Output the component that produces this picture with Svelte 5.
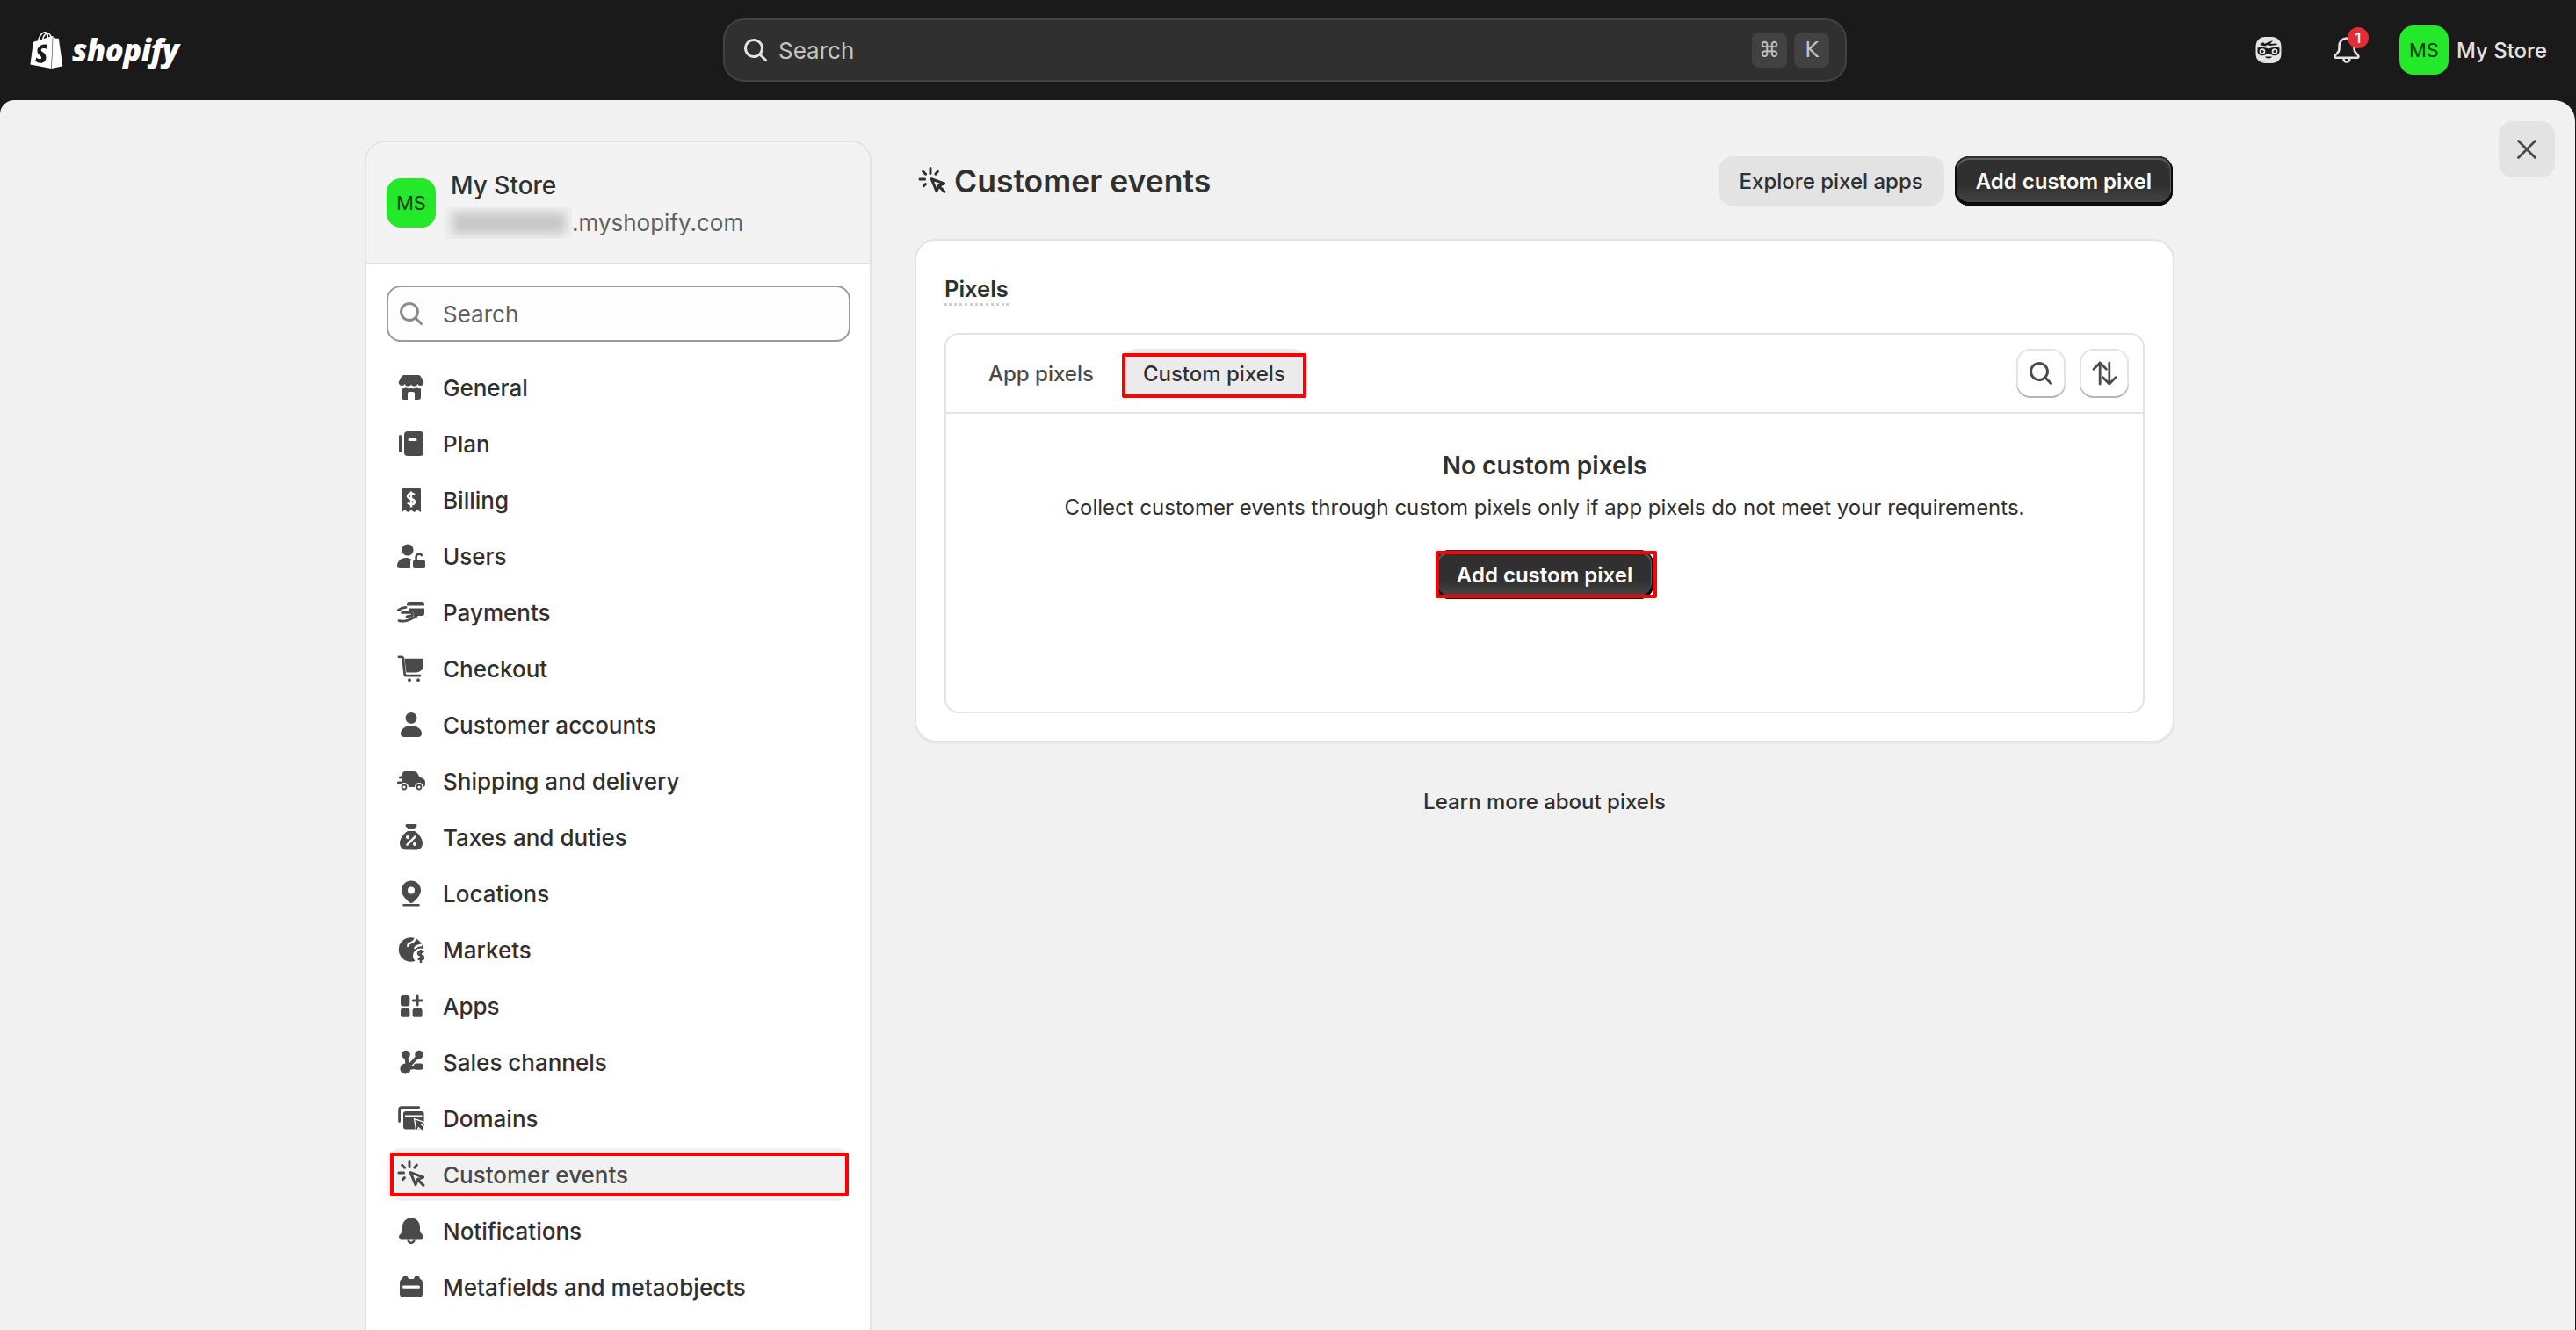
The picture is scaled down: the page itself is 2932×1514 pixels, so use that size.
<script>
  const cursor = '<g fill="none" stroke="currentColor" stroke-width="1.5" stroke-linecap="round" stroke-linejoin="round"><path d="M9 2.7v3M4.8 4.6l1.5 1.5M13.2 4.6l-1.3 1.5M3 9h2.8M5.2 12.8l1-1"/><path d="M9.6 8.8l7.2 2.7-3.1 1.2-1.2 3.2ZM13.8 12.8l3.2 3.4"/></g>';
  const nav = [
    { label: 'General', icon: '<path d="M6 3h8c.6 0 1.1.3 1.4.8L17 6.6c.3.6 0 1.9-1 2.3-1 .4-2-.1-2.3-.9-.4.9-1 1.3-1.9 1.3s-1.5-.4-1.8-1.1c-.3.7-.9 1.1-1.8 1.1s-1.5-.4-1.9-1.3c-.3.8-1.3 1.3-2.3.9-1-.4-1.3-1.7-1-2.3l1.6-2.8C4.9 3.3 5.4 3 6 3Z"/><path d="M4.5 10.6c1 .2 1.8 0 2.5-.5.8.6 2 .8 3 .3 1 .5 2.2.3 3-.3.7.5 1.5.7 2.5.5v4.9a1.5 1.5 0 0 1-1.5 1.5H12v-3.5a1 1 0 0 0-1-1H9a1 1 0 0 0-1 1V17H6a1.5 1.5 0 0 1-1.5-1.5Z"/>' },
    { label: 'Plan', icon: '<path d="M3 5.7a.75.75 0 0 1 1.5 0v8.6a.75.75 0 0 1-1.5 0Z"/><path fill-rule="evenodd" d="M8 3h7a2 2 0 0 1 2 2v10a2 2 0 0 1-2 2H8a2 2 0 0 1-2-2V5a2 2 0 0 1 2-2Zm1 4a.75.75 0 0 0 0 1.5h3.5a.75.75 0 0 0 0-1.5Z"/>' },
    { label: 'Billing', icon: '<path d="M6 3h8a1.5 1.5 0 0 1 1.5 1.5V17l-1.9-1.2-1.8 1.2-1.8-1.2-1.8 1.2-1.8-1.2L4.5 17V4.5A1.5 1.5 0 0 1 6 3Z"/><path fill="none" stroke="#fff" stroke-width="1.2" d="M12 7.3c-.4-.6-1.1-.9-2-.9-1.2 0-2 .6-2 1.5s.8 1.3 2 1.6 2 .7 2 1.6-.8 1.5-2 1.5c-.9 0-1.6-.3-2-.9M10 5.2v9"/>' },
    { label: 'Users', icon: '<circle cx="8" cy="6.5" r="3.3"/><path d="M2 15.5c0-2.5 2.2-4.5 5-4.5 1.2 0 2.2.3 3 .8-.3.4-.5 1-.5 1.6V17H3.5A1.5 1.5 0 0 1 2 15.5Z"/><rect x="11" y="12.3" width="7" height="4.7" rx="1"/><path fill="none" stroke="currentColor" stroke-width="1.3" d="M12.800 12.500v-2a1.800 1.800 0 0 1 3.500-.4"/>' },
    { label: 'Payments', icon: '<path d="M9 4h7a1.5 1.5 0 0 1 1.5 1.5V6.300H7.500V5.500A1.500 1.500 0 0 1 9 4Z"/><path d="M8.500 7.800h9v2.700a1.500 1.500 0 0 1-1.500 1.500h-4.500c.4-1.400-.2-2.500-1.500-2.500H8.500Z"/><path fill="none" stroke="currentColor" stroke-width="1.400" stroke-linecap="round" stroke-linejoin="round" d="M2.700 8.700C4 7.800 5.500 7.200 7 7.200M4.800 10.200h5.200c1 0 1 1.700 0 1.800l-2.500.400M3 14.800c2.500.5 4.500.2 6-.5l4-2.100"/>' },
    { label: 'Checkout', icon: '<path fill="none" stroke="currentColor" stroke-width="1.400" stroke-linecap="round" d="M3 3.400h1.300c.6 0 1 .4 1.100 1l.9 8.700c.1.700.5 1 1.100 1H15"/><path d="M6.200 4.400H17v3.800a4 4 0 0 1-4 4H7.200Z"/><circle cx="9" cy="16.600" r=".95"/><circle cx="14" cy="16.600" r=".95"/>' },
    { label: 'Customer accounts', icon: '<circle cx="10" cy="6.200" r="3.200"/><path d="M4 15c0-2.500 2.700-4.500 6-4.500s6 2 6 4.500c0 1.200-.8 2-2 2H6c-1.200 0-2-.8-2-2Z"/>' },
    { label: 'Shipping and delivery', icon: '<path d="M6.500 4.500h5c1 0 1.800.5 2.200 1.300l1 2 1.800.7c.9.400 1.500 1.200 1.500 2.200v1.300c0 .8-.6 1.500-1.500 1.500h-12V12H5v-1.500H5V9H5V6c0-.8.7-1.500 1.500-1.500Z"/><path d="M2.700 10.200h3v1.500h-3a.75.75 0 0 1 0-1.500ZM3.700 7.200h2.500v1.500H3.700a.75.75 0 0 1 0-1.500Z"/><circle cx="6" cy="13.500" r="2.100" stroke="#fff" stroke-width=".8"/><circle cx="14.500" cy="13.500" r="2.100" stroke="#fff" stroke-width=".8"/><circle cx="6" cy="13.500" r=".8" fill="#fff"/><circle cx="14.500" cy="13.500" r=".8" fill="#fff"/>' },
    { label: 'Taxes and duties', icon: '<path d="M7.500 2.500h5a.8.8 0 0 1 .6 1.300l-1.300 1.700H8.200L6.900 3.800a.8.8 0 0 1 .6-1.300Z"/><path d="M8 6.500h4c2.500 1.500 4.500 4.500 4.500 7 0 2.500-1.800 3.800-4 3.800h-5c-2.200 0-4-1.300-4-3.800 0-2.500 2-5.500 4.500-7Z"/><circle cx="8" cy="10" r="1" fill="#fff"/><circle cx="12" cy="14" r="1" fill="#fff"/><path stroke="#fff" stroke-width="1.300" stroke-linecap="round" d="M12.300 9.700l-4.600 4.600"/>' },
    { label: 'Locations', icon: '<path fill-rule="evenodd" d="M10 2.800a5.500 5.500 0 0 1 5.500 5.500c0 2.800-3 5.500-4.400 6.700a1.700 1.700 0 0 1-2.200 0C7.500 13.800 4.500 11.100 4.500 8.300A5.500 5.500 0 0 1 10 2.800Zm0 3.500a2 2 0 1 0 0 4 2 2 0 0 0 0-4Z"/><rect x="5.200" y="16" width="9.600" height="1.200" rx=".6"/>' },
    { label: 'Markets', icon: '<circle cx="9.800" cy="10" r="6.900"/><path fill="none" stroke="#fff" stroke-width="1.200" d="M12.500 3c-.3 2-1.500 2.800-3 3.300-1 .3-1.500 1.200-1.200 2.200M16 7.500c-2 0-3.200.5-4 2"/><circle cx="15.300" cy="13.500" r="4.300" fill="#fff"/><path fill="none" stroke="currentColor" stroke-width="1.200" d="M17 11.700c-.3-.5-.8-.7-1.500-.7-.9 0-1.500.4-1.500 1.100s.6 1 1.500 1.200 1.500.5 1.500 1.200-.6 1.200-1.500 1.200c-.7 0-1.200-.3-1.500-.7M15.500 10v7.500"/>' },
    { label: 'Apps', icon: '<rect x="4" y="4" width="5.200" height="6.200" rx="1.500"/><rect x="4" y="11.400" width="5.200" height="5" rx="1.300"/><rect x="10.800" y="11.400" width="5.500" height="5" rx="1.300"/><path stroke="currentColor" stroke-width="1.400" stroke-linecap="round" d="M13.600 4.500v5M11.100 7h5"/>' },
    { label: 'Sales channels', icon: '<path fill="none" stroke="currentColor" stroke-width="2" d="M7 6l1 7M14.500 6l-6.500 7M15 12.600l-7 .9"/><circle cx="7" cy="5.800" r="2.400"/><circle cx="14.500" cy="5.800" r="2.400"/><circle cx="6.700" cy="13.800" r="3"/><rect x="11.300" y="10.800" width="5.700" height="3.600" rx="1.800"/>' },
    { label: 'Domains', icon: '<path fill="none" stroke="currentColor" stroke-width="1.400" stroke-linecap="round" d="M3.300 11.800V5.200c0-.9.600-1.400 1.400-1.400h9.700"/><path fill-rule="evenodd" d="M6.800 6h9.200c.7 0 1.300.6 1.300 1.300V15c0 .6-.6 1.200-1.300 1.200H6.800c-.7 0-1.300-.6-1.300-1.200V7.300C5.500 6.600 6.100 6 6.800 6Zm-.3 2.200v.8h9.800v-.8Z"/><path stroke="#fff" stroke-width="1.300" paint-order="stroke" d="M12.200 10.800l5.100 1.700-2 1 2 2-1.200 1.200-2-2-1 2Z"/>' },
    { label: 'Customer events', icon: cursor },
    { label: 'Notifications', icon: '<path d="M10 2.800c-3 0-5 2.300-5 5.200v1.500c0 1-.4 1.600-1 2.300-.6.600-1 1.200-1 1.700 0 .8.700 1.200 1.500 1.200h11c.8 0 1.500-.4 1.500-1.200 0-.5-.4-1.100-1-1.700-.6-.7-1-1.300-1-2.300V8c0-2.900-2-5.200-5-5.200Z"/><path d="M7.700 14.800v.5a2.300 2.300 0 0 0 4.600 0v-.5h-1.300v.5a1 1 0 0 1-2 0v-.5Z"/>' },
    { label: 'Metafields and metaobjects', icon: '<path fill-rule="evenodd" d="M5 5.500c0-1 .7-1.700 1.700-1.700s1.600.6 1.800 1.700h3c.2-1.100.8-1.700 1.800-1.700s1.700.7 1.700 1.700c1 .2 1.500 1 1.500 2V14a1.800 1.800 0 0 1-1.800 1.800H5.300A1.800 1.800 0 0 1 3.500 14V7.500c0-1 .5-1.800 1.500-2Zm.8 3.800a.8.8 0 0 0 0 1.600h8.400a.8.8 0 0 0 0-1.600Z"/>' }
  ];
  const searchPath = 'M12.323 13.383a5.500 5.500 0 1 1 1.060-1.060l2.897 2.897a.75.75 0 1 1-1.060 1.060l-2.897-2.897Zm.677-4.383a4 4 0 1 1-8 0 4 4 0 0 1 8 0Z';
</script>

<header class="topbar">
  <div class="brand">
    <svg class="bag" viewBox="0 0 24 24" aria-hidden="true"><path fill="#fff" d="M15.337 23.979l7.216-1.561s-2.604-17.613-2.625-17.730c-.018-.116-.114-.192-.211-.192s-1.929-.136-1.929-.136-1.275-1.274-1.439-1.411c-.045-.037-.075-.057-.121-.074l-.914 21.104h.023zM11.710 11.305s-.81-.424-1.774-.424c-1.447 0-1.504.906-1.504 1.141 0 1.232 3.240 1.715 3.240 4.629 0 2.295-1.440 3.760-3.406 3.760-2.354 0-3.540-1.465-3.540-1.465l.646-2.086s1.245 1.066 2.280 1.066c.675 0 .975-.545.975-.932 0-1.619-2.654-1.694-2.654-4.359-.034-2.237 1.571-4.416 4.827-4.416 1.257 0 1.875.361 1.875.361l-.945 2.715-.02.01zM11.170.83c.136 0 .271.038.405.135-.984.465-2.064 1.639-2.508 3.992-.656.213-1.293.405-1.889.578C7.697 3.750 8.951.84 11.170.83zm1.235 2.949v.135c-.754.232-1.583.484-2.394.736.466-1.777 1.333-2.645 2.085-2.971.193.501.309 1.176.309 2.100zm.539-2.234c.694.074 1.141.867 1.429 1.755-.349.114-.735.231-1.158.366v-.252c0-.752-.096-1.371-.271-1.871v.002zm2.992 1.289c-.02 0-.06.021-.078.021s-.289.075-.714.21c-.423-1.233-1.176-2.370-2.508-2.370h-.115C12.135.209 11.669 0 11.265 0 8.159 0 6.675 3.877 6.210 5.846c-1.194.365-2.063.636-2.160.674-.675.213-.694.232-.772.870-.075.462-1.830 14.063-1.830 14.063L15.009 24l.927-21.166z"/></svg>
    <span class="wordmark">shopify</span>
  </div>
  <div class="globalsearch">
    <svg class="ic40" viewBox="0 0 20 20" aria-hidden="true"><path fill="currentColor" fill-rule="evenodd" d={searchPath}/></svg>
    <span class="gs-text">Search</span>
    <span class="kbd">⌘</span>
    <span class="kbd">K</span>
  </div>
  <div class="topright">
    <svg class="mask" viewBox="0 0 30 32" aria-hidden="true">
      <rect x="0.500" y="1" width="29" height="30" rx="10" fill="#e3e3e3"/>
      <path fill="#1a1a1a" d="M5 10l4-3 1.500 1.800L20 5l-3 4 7-.5 1 1.500-8 1-3-1-3 1.500Z"/>
      <path fill="#1a1a1a" d="M2.500 13.500c4-1.500 8-.5 12.500 1 4.500-1.500 8.500-2.500 12.500-1v4c0 3-2.800 4.800-5.500 4.800-3 0-4.500-2-7-2.800-2.500.8-4 2.800-7 2.800-2.700 0-5.500-1.800-5.500-4.800Z"/>
      <circle cx="8" cy="17.500" r="3.300" fill="#e3e3e3"/>
      <circle cx="22" cy="17.500" r="3.300" fill="#e3e3e3"/>
      <circle cx="8" cy="17.500" r="1.500" fill="#1a1a1a"/>
      <circle cx="22" cy="17.500" r="1.500" fill="#1a1a1a"/>
      <path fill="#1a1a1a" d="M11 23.500h8c-.8 2.500-7.200 2.500-8 0Z"/>
    </svg>
    <div class="bellwrap">
      <svg class="bell" viewBox="0 0 30 31" aria-hidden="true"><path fill="none" stroke="#e3e3e3" stroke-width="2.600" stroke-linejoin="round" stroke-linecap="round" d="M15 1.500c-5 0-8.500 3.800-8.500 9v3.500c0 2-1 3.300-2.500 4.800-1.200 1.200-2.500 2.500-2.500 3.200 0 1.200 1 1.800 2 1.800h23c1 0 2-.6 2-1.800 0-.7-1.300-2-2.500-3.200-1.500-1.500-2.500-2.800-2.500-4.800v-3.500c0-5.200-3.500-9-8.500-9ZM11.500 24c0 6 7 6 7 0"/></svg>
      <span class="badge">1</span>
    </div>
    <div class="avatar">MS</div>
    <span class="tr-name">My Store</span>
  </div>
</header>

<main class="stage">
  <button class="close" aria-label="Close">
    <svg viewBox="0 0 22 22" aria-hidden="true"><path fill="none" stroke="currentColor" stroke-width="2.800" stroke-linecap="round" d="M1.500 1.500l19 19M20.500 1.500l-19 19"/></svg>
  </button>

  <aside class="sidebar">
    <div class="storehead">
      <div class="avatar">MS</div>
      <div class="storeinfo">
        <div class="storename">My Store</div>
        <div class="domain"><span class="blur"><span class="blurbar"></span></span><span>.myshopify.com</span></div>
      </div>
    </div>
    <div class="sidebody">
      <div class="sidesearch">
        <svg class="ic40" viewBox="0 0 20 20" aria-hidden="true"><path fill="currentColor" fill-rule="evenodd" d={searchPath}/></svg>
        <span>Search</span>
      </div>
      <nav class="nav">
        {#each nav as item}
          <div class="row" class:selected={item.label === 'Customer events'}>
            <svg class="ic40 navicon" viewBox="0 0 20 20" fill="currentColor" aria-hidden="true">{@html item.icon}</svg>
            <span>{item.label}</span>
          </div>
        {/each}
      </nav>
    </div>
  </aside>

  <section class="main">
    <div class="pagehead">
      <svg class="ic40 titleicon" viewBox="0 0 20 20" aria-hidden="true">{@html cursor}</svg>
      <h1>Customer events</h1>
      <div class="actions">
        <button class="btn soft">Explore pixel apps</button>
        <button class="btn dark">Add custom pixel</button>
      </div>
    </div>

    <div class="card">
      <h2><span>Pixels</span></h2>
      <div class="inner">
        <div class="tabs">
          <div class="tab">App pixels</div>
          <div class="tab active">Custom pixels</div>
          <div class="tools">
            <button class="iconbtn" aria-label="Search">
              <svg class="ic40" viewBox="0 0 20 20" aria-hidden="true"><path fill="currentColor" fill-rule="evenodd" d={searchPath}/></svg>
            </button>
            <button class="iconbtn" aria-label="Sort">
              <svg class="ic40" viewBox="0 0 20 20" aria-hidden="true"><path fill="none" stroke="currentColor" stroke-width="1.400" stroke-linecap="round" stroke-linejoin="round" d="M7.600 16V4M4 7.600l3.600-3.600 3.600 3.600M12.900 4v12M9.300 12.400l3.600 3.600 3.600-3.600"/></svg>
            </button>
          </div>
        </div>
        <div class="empty">
          <h3>No custom pixels</h3>
          <p>Collect customer events through custom pixels only if app pixels do not meet your requirements.</p>
          <button class="btn dark flagged">Add custom pixel</button>
        </div>
      </div>
    </div>

    <div class="learn">Learn more about pixels</div>
  </section>
</main>

<style>
  :global(body) {
    margin: 0;
    background: #1a1a1a;
    font-family: Inter, "Noto Sans", sans-serif;
    color: #303030;
    overflow: hidden;
  }
  * { box-sizing: border-box; }
  button { font-family: inherit; border: 0; padding: 0; cursor: pointer; }
  h1, h2, h3, p { margin: 0; }

  .ic40 { width: 40px; height: 40px; flex: none; display: block; }

  .topbar {
    height: 114px;
    display: grid;
    grid-template-columns: 823px 1279px 1fr;
    align-items: center;
  }
  .brand { display: flex; align-items: center; padding-left: 32px; gap: 8px; }
  .bag { width: 42px; height: 48px; flex: none; }
  .wordmark {
    font-family: "Open Sans", sans-serif;
    font-style: italic;
    font-weight: 800;
    font-size: 34.5px;
    line-height: 48px;
    color: #fff;
    letter-spacing: -0.5px;
  }
  .globalsearch {
    height: 72px;
    background: #303030;
    border: 2px solid #424242;
    border-radius: 24px;
    display: flex;
    align-items: center;
    padding: 0 18px 0 15px;
    gap: 8px;
    color: #e3e3e3;
    font-size: 26px;
    font-weight: 400;
  }
  .gs-text { flex: 1; color: #c4c4c4; margin-left: -2px; }
  .kbd {
    width: 40px;
    height: 40px;
    background: #424242;
    border-radius: 8px;
    display: flex;
    align-items: center;
    justify-content: center;
    color: #c4c4c4;
    font-size: 24px;
    font-family: "DejaVu Sans", Inter, sans-serif;
  }
  .topright { display: flex; align-items: center; justify-content: flex-end; padding-right: 33px; }
  .mask { width: 30px; height: 32px; margin-right: 59px; flex: none; }
  .bellwrap { position: relative; width: 30px; height: 31px; margin-right: 45px; flex: none; }
  .bell { width: 30px; height: 31px; display: block; }
  .badge {
    position: absolute;
    left: 16px;
    top: -11px;
    width: 24px;
    height: 24px;
    border-radius: 50%;
    background: #e22c38;
    color: #fff;
    font-size: 16px;
    font-weight: 600;
    display: flex;
    align-items: center;
    justify-content: center;
  }
  .avatar {
    width: 56px;
    height: 56px;
    border-radius: 16px;
    background: #24e82a;
    color: #0b3d0d;
    font-size: 22px;
    font-weight: 400;
    display: flex;
    align-items: center;
    justify-content: center;
    flex: none;
  }
  .tr-name { color: #e3e3e3; font-size: 24px; font-weight: 500; margin-left: 9px; white-space: nowrap; }

  .stage {
    position: relative;
    height: 1400px;
    overflow: hidden;
    background: #f1f1f1;
    border-radius: 16px 24px 0 0;
    display: flex;
    align-items: flex-start;
    padding: 46px 0 0 415px;
    gap: 49px;
    margin-right: 1px;
  }
  .close {
    position: absolute;
    left: 2844px;
    top: 24px;
    width: 64px;
    height: 64px;
    border-radius: 16px;
    background: #e3e3e3;
    color: #4a4a4a;
    display: flex;
    align-items: center;
    justify-content: center;
  }
  .close svg { width: 22px; height: 22px; }

  .sidebar {
    width: 577px;
    height: 1400px;
    flex: none;
    border: 2px solid #e3e3e3;
    border-radius: 24px;
    overflow: hidden;
    background: #fff;
  }
  .storehead {
    height: 139px;
    background: #f3f3f3;
    border-bottom: 2px solid #e3e3e3;
    display: flex;
    align-items: center;
    padding-left: 23px;
    gap: 17px;
  }
  .storeinfo { display: flex; flex-direction: column; gap: 6px; margin-top: 2px; }
  .storename { font-size: 28px; font-weight: 500; line-height: 38px; color: #303030; }
  .domain { display: flex; align-items: center; margin-left: -7px; font-size: 26px; line-height: 36px; color: #616161; }
  .blur { width: 145px; height: 36px; background: #efefef; overflow: hidden; display: flex; align-items: center; justify-content: center; }
  .blurbar { display: block; width: 128px; height: 24px; background: #c6c6c6; filter: blur(6px); }

  .sidebody { padding: 24px 23px 0; }
  .sidesearch {
    height: 64px;
    width: 528px;
    border: 2px solid #9a9a9a;
    border-radius: 16px;
    background: #fdfdfd;
    display: flex;
    align-items: center;
    padding-left: 6px;
    gap: 16px;
    font-size: 26px;
    color: #616161;
  }
  .sidesearch svg { color: #8a8a8a; }
  .nav { margin-top: 22px; display: flex; flex-direction: column; gap: 4px; }
  .row {
    position: relative;
    height: 60px;
    width: 528px;
    display: flex;
    align-items: center;
    padding-left: 8px;
    gap: 16px;
    border-radius: 16px;
    font-size: 26px;
    font-weight: 500;
    color: #303030;
  }
  .navicon { color: #4a4a4a; }
  .row.selected { background: #f1f1f1; color: #4a4a4a; }
  .row.selected::after {
    content: "";
    position: absolute;
    inset: 5px 2px 5px 4px;
    border: 4px solid #f00;
    border-radius: 2px;
    pointer-events: none;
  }

  .main { width: 1434px; flex: none; margin-top: 18px; }
  .pagehead { height: 56px; display: flex; align-items: center; }
  .titleicon { color: #303030; margin-right: 5px; }
  h1 { font-size: 35.5px; font-weight: 600; color: #303030; flex: 1; }
  .actions { display: flex; gap: 12px; margin-right: 2px; }
  .btn {
    height: 56px;
    border-radius: 16px;
    font-size: 24px;
    font-weight: 500;
    padding: 0 24px;
    white-space: nowrap;
  }
  .soft { background: #e3e3e3; color: #303030; }
  .dark {
    color: #fff;
    font-weight: 600;
    background: linear-gradient(#303030 60%, #4a4a4a);
    box-shadow: inset 0 -2px 0 2px #0b0b0b, inset 0 0 0 2px #303030, inset 0 1px 0 3px rgba(255, 255, 255, 0.22);
  }
  .flagged { position: relative; }
  .flagged::after {
    content: "";
    position: absolute;
    inset: 1px -4px 1px 0;
    border: 4px solid #f00;
    border-radius: 2px;
    pointer-events: none;
  }

  .card {
    margin-top: 38px;
    background: #fff;
    border: 2px solid #e3e3e3;
    border-radius: 24px;
    padding: 35px 32px 31px;
    box-shadow: 0 2px 0 rgba(0, 0, 0, 0.03);
  }
  h2 { font-size: 25.5px; font-weight: 600; line-height: 40px; color: #303030; margin-bottom: 30px; }
  h2 span { display: inline-block; height: 39px; border-bottom: 3px dotted #cfcfcf; }
  .inner { border: 2px solid #e3e3e3; border-radius: 16px; height: 433px; }
  .tabs {
    height: 90px;
    border-bottom: 2px solid #e3e3e3;
    display: flex;
    align-items: center;
    padding: 0 16px 0 24px;
    gap: 8px;
  }
  .tab {
    position: relative;
    height: 56px;
    display: flex;
    align-items: center;
    padding: 0 24px;
    border-radius: 16px;
    font-size: 24px;
    font-weight: 500;
    color: #4a4a4a;
  }
  .tab.active { background: #ebebeb; color: #303030; }
  .tab.active::after {
    content: "";
    position: absolute;
    inset: 5px 0 0 0;
    border: 4px solid #f00;
    border-radius: 2px;
    pointer-events: none;
  }
  .tools { margin-left: auto; display: flex; gap: 16px; }
  .iconbtn {
    width: 56px;
    height: 56px;
    border-radius: 16px;
    background: #fff;
    color: #4a4a4a;
    box-shadow: inset 0 -2px 0 #b5b5b5, inset 0 0 0 2px #e3e3e3;
    display: flex;
    align-items: center;
    justify-content: center;
  }
  .empty { display: flex; flex-direction: column; align-items: center; padding-top: 39px; }
  h3 { font-size: 28px; font-weight: 600; line-height: 40px; color: #303030; }
  .empty p { font-size: 24px; font-weight: 400; line-height: 40px; margin-top: 8px; color: #303030; }
  .empty .btn { margin-top: 28px; }
  .learn { margin-top: 48px; text-align: center; font-size: 24px; font-weight: 500; line-height: 40px; color: #303030; }
</style>
